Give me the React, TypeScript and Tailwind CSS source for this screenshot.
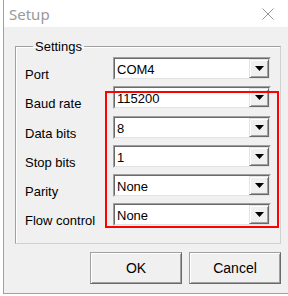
const rows = [
  { label: 'Port', value: 'COM4' },
  { label: 'Baud rate', value: '115200' },
  { label: 'Data bits', value: '8' },
  { label: 'Stop bits', value: '1' },
  { label: 'Parity', value: 'None' },
  { label: 'Flow control', value: 'None' },
];

const Combo = ({ value }: { value: string }) => (
  <div className="h-[23px] w-[158px] border border-t-[#a0a0a0] border-l-[#a0a0a0] border-r-[#f0f0f0] border-b-[#f0f0f0]">
    <div className="flex h-full border border-t-[#696969] border-l-[#696969] border-r-[#e3e3e3] border-b-[#e3e3e3] bg-white">
      <span className="flex-1 pl-[2px] pt-[2px] leading-[18px]">{value}</span>
      <div className="flex w-[20px] items-center justify-center border border-t-[#e3e3e3] border-l-[#e3e3e3] border-r-[#696969] border-b-[#696969] bg-[#f0f0f0] shadow-[inset_1px_1px_0_#fff,inset_-1px_-1px_0_#a0a0a0]">
        <svg width="9" height="5" viewBox="0 0 9 5">
          <path d="M0 0h9L4.5 5z" fill="#000" />
        </svg>
      </div>
    </div>
  </div>
);

export default function App() {
  return (
    <div className="relative h-[296px] w-[288px] overflow-hidden bg-white font-['Liberation_Sans',Arial,sans-serif] text-[13px] text-black">
      <div className="ml-[3px] flex h-[294px] flex-col border-l border-b border-[#a0a0a0]">
        <div className="flex h-[27px] shrink-0 items-center justify-between bg-white pl-[5px] pr-[14px]">
          <span className="font-['Noto_Sans',sans-serif] text-[15px] leading-[20px] text-[#999]">Setup</span>
          <svg width="12" height="12" viewBox="0 0 12 12">
            <path d="M0.5 0.5L11.5 11.5M11.5 0.5L0.5 11.5" stroke="#888" strokeWidth="0.9" />
          </svg>
        </div>
        <div className="flex flex-1 flex-col bg-[#f0f0f0] pl-[11px] pr-[7px]">
          <fieldset className="mt-[12px] border border-[#d0d0d0] border-t-[#a0a0a0] border-l-[#a0a0a0] pb-[17px] pl-[9px] pt-[3px] shadow-[inset_1px_1px_0_#fff]">
            <legend className="ml-[8px] px-[2px] leading-[15px]">Settings</legend>
            <div className="flex flex-col gap-[6.3px]">
              {rows.map((r) => (
                <div key={r.label} className="flex h-[23px] items-start">
                  <span className="w-[88px] shrink-0 whitespace-nowrap pt-[10px] leading-[15px]">{r.label}</span>
                  <Combo value={r.value} />
                </div>
              ))}
            </div>
          </fieldset>
          <div className="mt-[8px] flex justify-end gap-[7px]">
            <button className="h-[32px] w-[92px] border border-[#a0a0a0] border-b-[#696969] border-r-[#696969] bg-[#f0f0f0] shadow-[inset_1px_1px_0_#fff,inset_-1px_-1px_0_#a0a0a0] text-[14px]">
              OK
            </button>
            <button className="h-[32px] w-[92px] border border-[#a0a0a0] border-b-[#696969] border-r-[#696969] bg-[#f0f0f0] shadow-[inset_1px_1px_0_#fff,inset_-1px_-1px_0_#a0a0a0] text-[14px]">
              Cancel
            </button>
          </div>
        </div>
      </div>
      <div className="pointer-events-none absolute left-[105px] top-[91px] h-[137px] w-[174px] border-2 border-[#ff0000]" />
    </div>
  );
}
